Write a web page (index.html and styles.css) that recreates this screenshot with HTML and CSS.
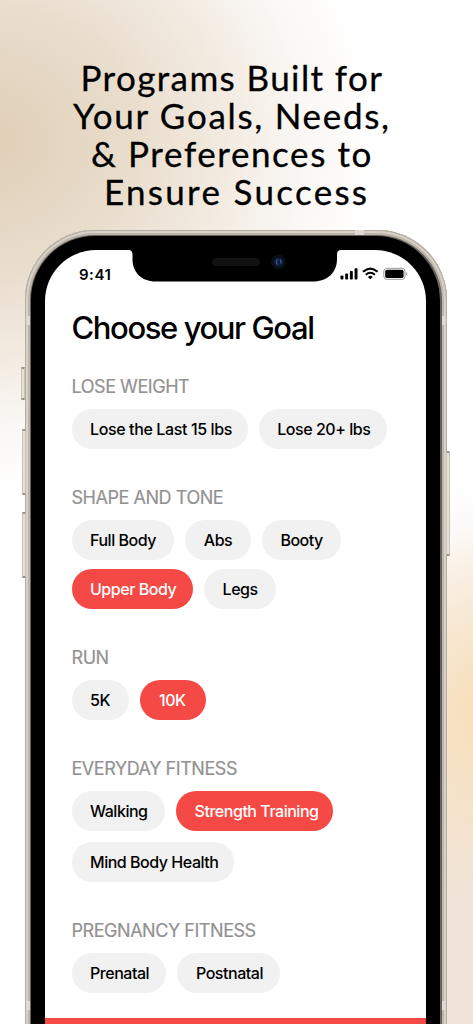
FILE: index.html
```html
<!DOCTYPE html>
<html lang="en">
<head>
  <meta charset="UTF-8">
  <meta name="viewport" content="width=device-width, initial-scale=1.0">
  <title>Choose your Goal</title>
  <link rel="stylesheet" href="styles.css">
</head>
<body>
  <div class="promo">
    <h1 class="headline">
      <span class="line-1">Programs Built for</span>
      <span class="line-2">Your Goals, Needs,</span>
      <span class="line-3">&amp; Preferences to</span>
      <span class="line-4">Ensure Success</span>
    </h1>

    <div class="phone">
      <i class="side-button mute"></i>
      <i class="side-button volume-up"></i>
      <i class="side-button volume-down"></i>
      <i class="side-button power"></i>
      <i class="antenna antenna-top"></i>
      <i class="antenna antenna-left"></i>
      <i class="antenna antenna-right"></i>
      <i class="antenna antenna-bottom-left"></i>
      <i class="antenna antenna-bottom-right"></i>

      <div class="bezel">
        <div class="screen">
          <svg class="notch" width="214" height="32" viewBox="0 0 214 32">
            <path d="M0 0C3.500 0 4.500 1.500 4.500 5V9C4.500 22 13 31.500 28 31.500H185C200 31.500 209 22 209 9V5C209 1.500 210 0 213.500 0Z" fill="#000"/>
            <rect x="84" y="8" width="48" height="8" rx="4" fill="#111"/>
            <circle cx="150.500" cy="12" r="7.500" fill="#0a0d15"/>
            <circle cx="150.500" cy="12" r="4.500" fill="#101c38"/>
            <path d="M149.500 9.500q-2.500 2.500 0 5M152 9.500q2 2 .5 4" fill="none" stroke="#2f568f" stroke-width="1.300"/>
          </svg>

          <div class="status-bar">
            <span class="time">9:41</span>
            <svg class="status-icons" width="69" height="14" viewBox="0 0 69 14">
              <rect x="0.500" y="8.500" width="2.900" height="4" rx="0.800"/>
              <rect x="5.200" y="6.500" width="2.900" height="6" rx="0.800"/>
              <rect x="9.900" y="4" width="2.900" height="8.500" rx="0.800"/>
              <rect x="14.600" y="1.300" width="2.900" height="11.200" rx="0.800"/>
              <path d="M23 4.800Q30.300 -1.600 37.600 4.800" fill="none" stroke="#000" stroke-width="2.100"/>
              <path d="M25.700 7.700Q30.300 3.700 34.900 7.700" fill="none" stroke="#000" stroke-width="2"/>
              <path d="M27.900 9.900Q30.300 7.800 32.700 9.900L30.300 12.300Z"/>
              <rect x="43.800" y="1.300" width="21.200" height="11" rx="3" fill="none" stroke="#999" stroke-width="1"/>
              <rect x="45.200" y="2.700" width="18.400" height="8.200" rx="1.700"/>
              <path d="M66.200 5q2.400 1.800 0 3.700z" fill="#999"/>
            </svg>
          </div>

          <main class="goals">
            <h2 class="goals-title">Choose your Goal</h2>

            <section class="group">
              <h3>LOSE WEIGHT</h3>
              <div class="chips">
                <button class="chip w-last15">Lose the Last 15 lbs</button>
                <button class="chip w-lose20">Lose 20+ lbs</button>
              </div>
            </section>

            <section class="group">
              <h3>SHAPE AND TONE</h3>
              <div class="chips">
                <button class="chip w-full">Full Body</button>
                <button class="chip w-abs">Abs</button>
                <button class="chip w-booty">Booty</button>
                <button class="chip selected w-upper">Upper Body</button>
                <button class="chip w-legs">Legs</button>
              </div>
            </section>

            <section class="group">
              <h3>RUN</h3>
              <div class="chips">
                <button class="chip w-5k">5K</button>
                <button class="chip selected w-10k">10K</button>
              </div>
            </section>

            <section class="group">
              <h3>EVERYDAY FITNESS</h3>
              <div class="chips chips-loose">
                <button class="chip w-walking">Walking</button>
                <button class="chip selected w-strength">Strength Training</button>
                <button class="chip w-mind">Mind Body Health</button>
              </div>
            </section>

            <section class="group">
              <h3>PREGNANCY FITNESS</h3>
              <div class="chips">
                <button class="chip w-prenatal">Prenatal</button>
                <button class="chip w-postnatal">Postnatal</button>
              </div>
            </section>
          </main>

          <div class="bottom-bar"></div>
        </div>
      </div>
    </div>
  </div>
</body>
</html>
```

FILE: styles.css
```css
* {
  box-sizing: border-box;
}
body {
  margin: 0;
  font-family: Inter, "Liberation Sans", sans-serif;
  color: #000;
}
.promo {
  width: 473px;
  height: 1024px;
  overflow: hidden;
  padding-top: 58px;
  background:
    radial-gradient(ellipse 110px 190px at 480px 715px, #f8dfba 0%, rgba(250, 226, 189, 0.5) 50%, rgba(250, 226, 189, 0) 100%),
    radial-gradient(ellipse 240px 480px at 500px 960px, #f0e3d7 0%, #f0e4d9 55%, rgba(240, 228, 217, 0) 100%),
    radial-gradient(ellipse 385px 350px at -10px 140px, #e0cfb7 0%, #e8dccb 35%, #f2eae0 60%, #faf7f4 82%, rgba(255, 255, 255, 0) 100%),
    #fff;
}

/* Headline */
.headline {
  margin: 0;
  height: 171.5px;
  font-family: Lato, "Open Sans", sans-serif;
  font-size: 35px;
  font-weight: 400;
  line-height: 38px;
  -webkit-text-stroke: 0.3px #000;
}
.headline span {
  display: block;
  white-space: nowrap;
}
.line-1 {
  padding-left: 80.5px;
  letter-spacing: 1.4px;
}
.line-2 {
  padding-left: 73px;
  letter-spacing: 1.7px;
}
.line-3 {
  padding-left: 91px;
  letter-spacing: 1.6px;
}
.line-4 {
  padding-left: 104px;
  letter-spacing: 2.3px;
}

/* Phone */
.phone {
  position: relative;
  width: 422px;
  height: 900px;
  margin-left: 24.5px;
  padding: 6.5px;
  border-radius: 70px 70px 0 0;
  background: #cfc8be;
  box-shadow: inset 0 0 0 1px #b5ada2, inset 0 0 0 3px #d8d1c7, inset 0 0 0 5px #beb6ab, inset 0 0 0 7px #68625b;
}
.bezel {
  height: 100%;
  padding: 14px 14px 0;
  border-radius: 64px 64px 0 0;
  background: #000;
}
.screen {
  position: relative;
  height: 800px;
  border-radius: 51px 51px 0 0;
  background: #fff;
}
.side-button {
  position: absolute;
  width: 4px;
  background: #e7e0d7;
  border: 1px solid #c9c1b7;
  border-top: 2px solid #9b9287;
  border-bottom: 2px solid #9b9287;
  border-radius: 1px;
}
.mute {
  left: -4px;
  top: 137px;
  height: 33px;
}
.volume-up {
  left: -3px;
  top: 199px;
  height: 66px;
}
.volume-down {
  left: -3px;
  top: 282px;
  height: 66px;
}
.power {
  right: -3px;
  top: 221px;
  height: 105px;
}
.antenna {
  position: absolute;
  width: 4px;
  height: 9px;
  background: #dedad2;
}
.antenna-top {
  left: 330px;
  top: 0;
  width: 9px;
  height: 5px;
}
.antenna-left {
  left: 1px;
  top: 86px;
}
.antenna-right {
  right: 1px;
  top: 86px;
}
.antenna-bottom-left {
  left: 1px;
  top: 771px;
}
.antenna-bottom-right {
  right: 1px;
  top: 771px;
}
.notch {
  position: absolute;
  left: 83px;
  top: -0.5px;
}

/* Status bar */
.status-bar {
  display: flex;
  justify-content: space-between;
  align-items: flex-start;
  padding: 17px 17px 0 34px;
  height: 61px;
}
.time {
  font-size: 15px;
  font-weight: 600;
  line-height: 15px;
  letter-spacing: 0.5px;
}
.status-icons {
  display: block;
}

/* Goals */
.goals {
  padding-left: 26.5px;
}
.goals-title {
  margin: 0 0 33px;
  font-size: 31px;
  font-weight: 500;
  line-height: 34px;
  letter-spacing: -1.4px;
  white-space: nowrap;
}
.group {
  margin-bottom: 40px;
}
.group h3 {
  margin: 0 0 13px;
  font-size: 18px;
  font-weight: 400;
  line-height: 18px;
  letter-spacing: -0.45px;
  color: #929292;
  -webkit-text-stroke: 0.2px #929292;
}
.chips {
  display: flex;
  flex-wrap: wrap;
  gap: 9px 11.3px;
}
.chips-loose {
  row-gap: 11px;
}
.chip {
  height: 40px;
  padding: 0 0 0 18.5px;
  border: none;
  border-radius: 20px;
  background: #f1f1f1;
  color: #000;
  font-family: inherit;
  font-size: 16px;
  font-weight: 500;
  letter-spacing: -0.47px;
  text-align: left;
  white-space: nowrap;
}
.chip.selected {
  background: #f54945;
  color: #fff;
}
.w-last15 {
  width: 176px;
  letter-spacing: -0.38px;
}
.w-lose20 { width: 128.5px; }
.w-full { width: 102.5px; }
.w-abs { width: 65.3px; }
.w-booty { width: 79px; margin-right: 30px; }
.w-upper { width: 121.3px; }
.w-legs { width: 71.5px; }
.w-5k { width: 57.7px; }
.w-10k { width: 65.3px; }
.w-walking { width: 93.3px; }
.w-strength { width: 156.5px; }
.w-mind { width: 162.8px; }
.w-prenatal { width: 94.7px; }
.w-postnatal { width: 102.2px; }

.bottom-bar {
  margin-top: -15px;
  height: 40px;
  background: #f54945;
}
```
